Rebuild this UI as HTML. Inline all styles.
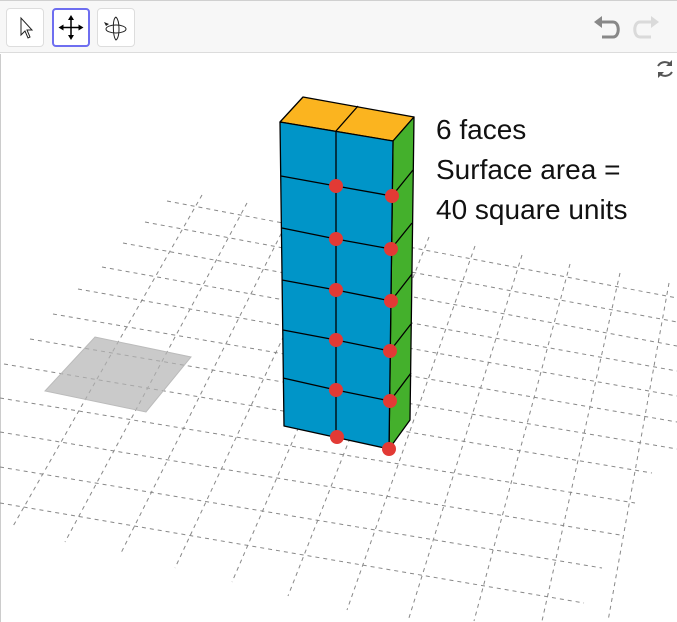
<!DOCTYPE html>
<html><head><meta charset="utf-8"><style>
html,body{margin:0;padding:0;width:677px;height:622px;overflow:hidden;background:#fff;font-family:"Liberation Sans",sans-serif}
.bar{position:absolute;left:0;top:0;width:677px;height:53px;background:#f7f7f7;border-bottom:1px solid #dcdcdc;border-top:1px solid #d0d0d0;box-sizing:border-box}
.btn{position:absolute;top:7px;width:38px;height:39px;background:#fff;border:1px solid #ddd;border-radius:4px;box-sizing:border-box}
.sel{border:2px solid #6e6ef0}
.txt{position:absolute;left:436px;font-size:28px;color:#111;line-height:40px;white-space:nowrap}
</style></head><body>
<div class="bar">
 <div class="btn" style="left:6px"><svg width="36" height="37" viewBox="0 0 36 37"><path d="M14 9 L14 26 L18 22 L21 29 L23 28 L20 21 L25 21 Z" fill="#fff" stroke="#222" stroke-width="1"/></svg></div>
 <div class="btn sel" style="left:52px"><svg width="34" height="35" viewBox="0 0 34 35"><path d="M17 7 V28 M7 17.5 H27" stroke="#000" stroke-width="1.5"/><path d="M17 5 L14 10 H20Z M17 30 L14 25 H20Z M4.5 17.5 L9.5 14.5 V20.5Z M29.5 17.5 L24.5 14.5 V20.5Z" fill="#000"/></svg></div>
 <div class="btn" style="left:97px"><svg width="36" height="37" viewBox="0 0 36 37"><ellipse cx="18" cy="20" rx="10" ry="4" fill="none" stroke="#222" stroke-width="1"/><path d="M18 8 C14 10 15 28 18 31 C22 28 22 12 18 8" fill="none" stroke="#222" stroke-width="1"/><path d="M8 17 L6 13 L11 15Z" fill="#222"/></svg></div>
</div>
<svg style="position:absolute;left:592px;top:14px" width="32" height="28" viewBox="0 0 32 28"><path d="M8 8 H21 C28 8 28 23 21 23 H10" fill="none" stroke="#888" stroke-width="3"/><path d="M2 8 L10 2 V14Z" fill="#888"/></svg>
<svg style="position:absolute;left:629px;top:14px" width="32" height="28" viewBox="0 0 32 28"><path d="M24 8 H11 C4 8 4 23 11 23 H22" fill="none" stroke="#dadada" stroke-width="3"/><path d="M30 8 L22 2 V14Z" fill="#dadada"/></svg>
<svg style="position:absolute;left:653px;top:57px" width="24" height="24" viewBox="0 0 24 24"><path d="M18 8 A8 8 0 0 0 5 9 M6 16 A8 8 0 0 0 19 15" fill="none" stroke="#555" stroke-width="2"/><path d="M19 3 V9 H13Z M5 21 V15 H11Z" fill="#555"/></svg>
<svg style="position:absolute;left:0;top:0;display:block" width="677" height="622">
<line x1="0.5" y1="54" x2="0.5" y2="622" stroke="#ccc"/>
<g stroke="#888" stroke-width="1" stroke-dasharray="4 4" fill="none">
<line x1="202" y1="195" x2="12" y2="528"/>
<line x1="247" y1="203" x2="65" y2="542"/>
<line x1="292" y1="212" x2="120" y2="555"/>
<line x1="338" y1="220" x2="175" y2="568"/>
<line x1="384" y1="229" x2="232" y2="582"/>
<line x1="429" y1="237" x2="288" y2="596"/>
<line x1="475" y1="246" x2="347" y2="610"/>
<line x1="522" y1="255" x2="408" y2="621"/>
<line x1="570" y1="264" x2="474" y2="621"/>
<line x1="620" y1="273" x2="542" y2="621"/>
<line x1="669" y1="283" x2="608" y2="621"/>
<line x1="167" y1="201" x2="677" y2="298"/>
<line x1="145" y1="222" x2="677" y2="322"/>
<line x1="123" y1="243" x2="677" y2="346"/>
<line x1="102" y1="267" x2="677" y2="371"/>
<line x1="78" y1="289" x2="677" y2="396"/>
<line x1="53" y1="314" x2="677" y2="422"/>
<line x1="30" y1="339" x2="677" y2="449"/>
<line x1="4" y1="364" x2="652" y2="473"/>
<line x1="0" y1="398" x2="635" y2="503"/>
<line x1="0" y1="432" x2="620" y2="535"/>
<line x1="0" y1="467" x2="602" y2="568"/>
<line x1="0" y1="503" x2="584" y2="603"/>
</g>
<polygon points="45,391 95,337 191,357 146,412" fill="#b4b4b4" fill-opacity="0.7" stroke="#bbb"/>
<g stroke="#000" stroke-width="1.3" stroke-linejoin="round">
<polygon points="280,122 303,97 414,117 393,141" fill="#fbb41f"/>
<line x1="336" y1="131" x2="358" y2="106"/>
<polygon points="393,141 414,117 410,420 389,449" fill="#44b02c"/>
<polygon points="280,122 393,141 389,449 284,426" fill="#0095c8"/>
<line x1="336" y1="131" x2="336" y2="437"/>
<polyline fill="none" points="281,176 336,186 392,196 413,170"/>
<polyline fill="none" points="282,228 336,239 391,249 412,223"/>
<polyline fill="none" points="282,280 336,290 391,301 412,274"/>
<polyline fill="none" points="283,330 336,340 390,351 411,324"/>
<polyline fill="none" points="283,378 336,390 390,401 411,373"/>
</g>
<g fill="#e23a35">
<circle cx="336" cy="186" r="7"/><circle cx="336" cy="239" r="7"/><circle cx="336" cy="290" r="7"/><circle cx="336" cy="340" r="7"/><circle cx="336" cy="390" r="7"/><circle cx="337" cy="437" r="7"/>
<circle cx="392" cy="196" r="7"/><circle cx="391" cy="249" r="7"/><circle cx="391" cy="301" r="7"/><circle cx="390" cy="351" r="7"/><circle cx="390" cy="401" r="7"/><circle cx="389" cy="449" r="7"/>
</g>
</svg>
<div class="txt" style="top:110px">6 faces</div>
<div class="txt" style="top:150px">Surface area =</div>
<div class="txt" style="top:190px">40 square units</div>
</body></html>
